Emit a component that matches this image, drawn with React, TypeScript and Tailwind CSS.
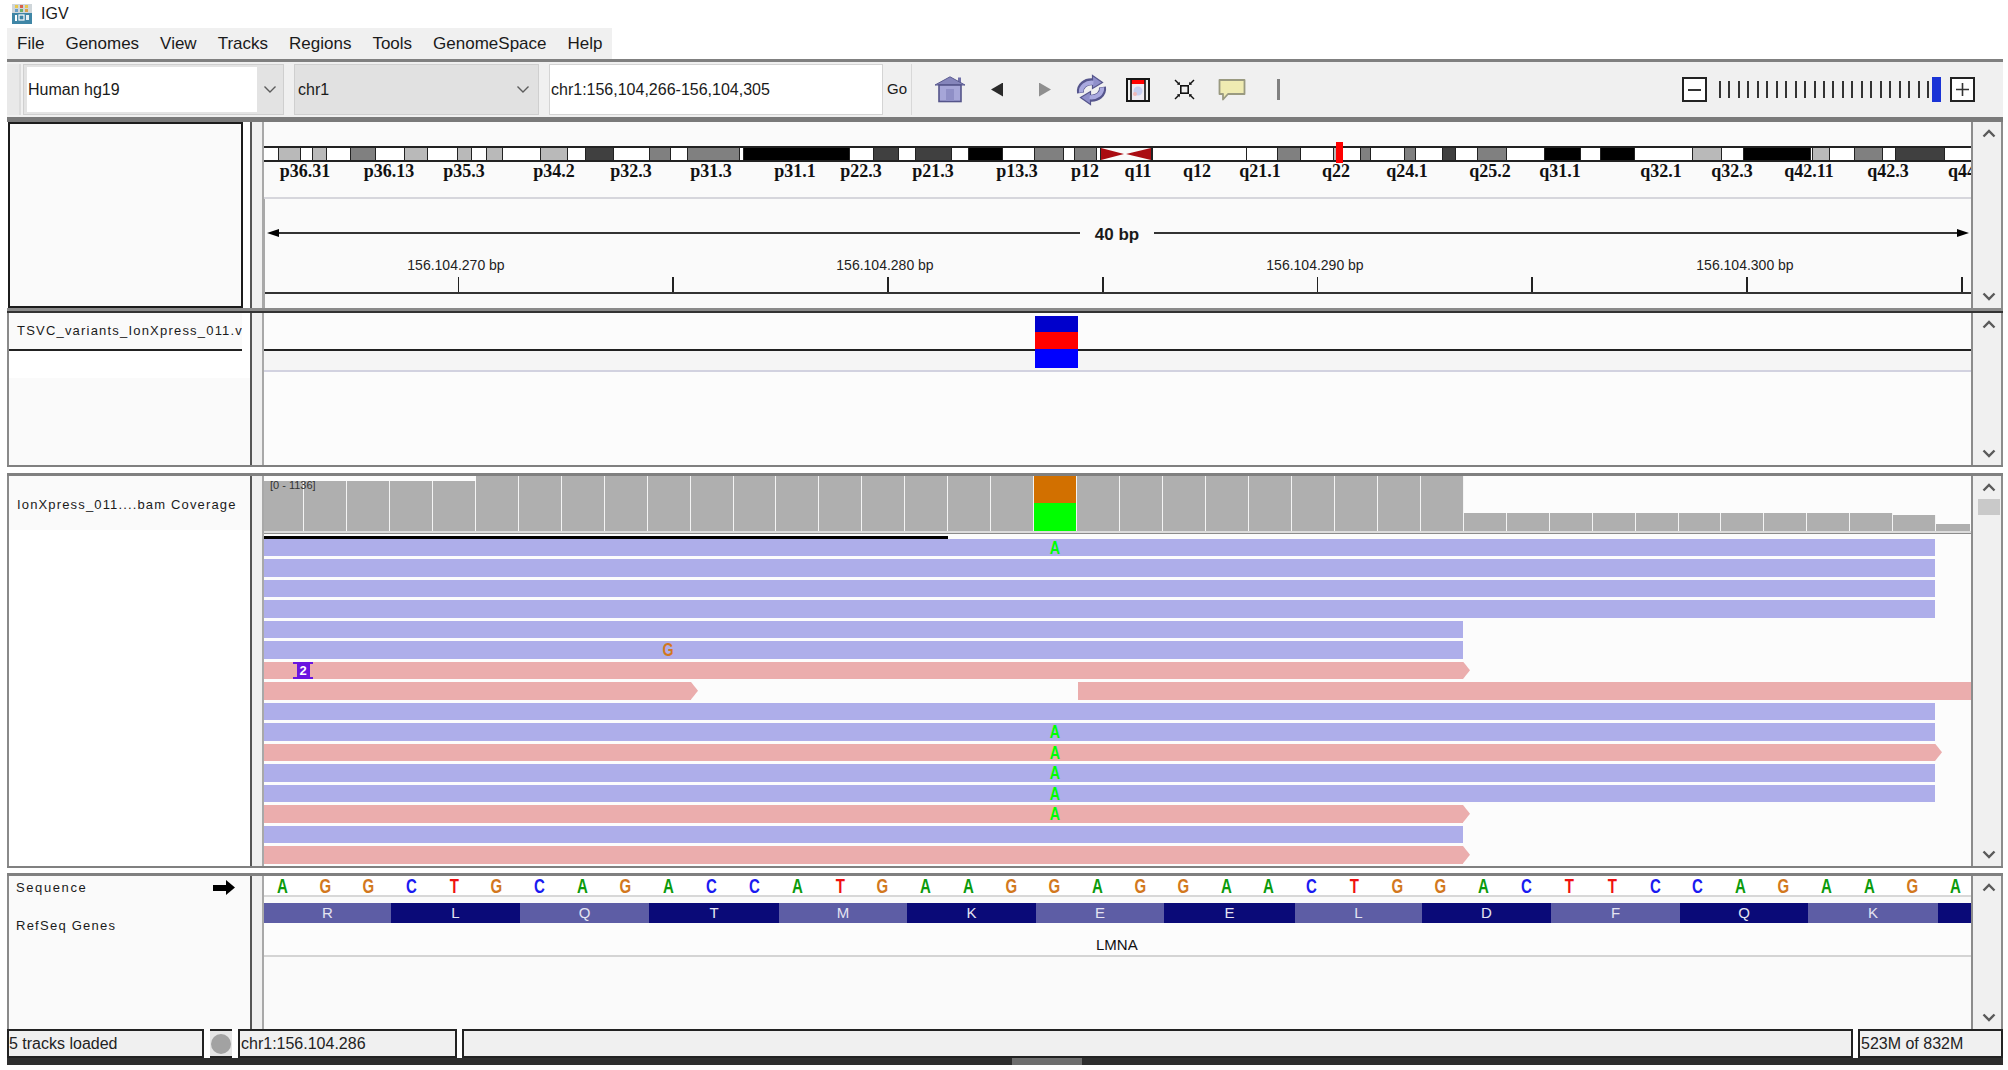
import React from "react";

const Chevron = ({ up }: { up?: boolean }) => (
  <svg width="14" height="9" viewBox="0 0 14 9" className="block">
    <polyline points={up ? "1.5,7.5 7,2 12.5,7.5" : "1.5,1.5 7,7 12.5,1.5"} fill="none" stroke="#5a5a5a" strokeWidth="2.4" />
  </svg>
);

const ScrollBar = ({ children }: { children?: React.ReactNode }) => (
  <div className="relative flex h-full w-[32px] flex-col items-center justify-between border-r-2 border-l-2 border-[#8c8c8c] bg-[#f0f0f0] py-[7px] pl-[3px]">
    <Chevron up />
    {children}
    <Chevron />
  </div>
);

const Gutter = () => (
  <div className="h-full w-[14px] shrink-0 border-r-2 border-l-2 border-r-[#a8a8a8] border-l-[#555555] bg-[#f0f0f0]" />
);

const bands: [number, string][] = [
  [279, "w"], [301, "l"], [313, "w"], [327, "l"], [351, "w"], [376, "m"], [405, "w"], [428, "l"], [458, "w"], [472, "l"],
  [487, "w"], [503, "l"], [541, "w"], [568, "l"], [586, "w"], [614, "d"], [650, "w"], [671, "m"], [688, "w"], [740, "m"],
  [744, "w"], [850, "k"], [874, "w"], [899, "d"], [916, "w"], [952, "d"], [969, "w"], [1003, "k"], [1035, "w"], [1064, "m"],
  [1075, "w"], [1097, "m"], [1101, "w"],
];
const bands2: [number, string][] = [
  [1246, "w"], [1277, "w"], [1300, "m"], [1333, "w"], [1340, "l"], [1360, "w"], [1370, "m"], [1404, "w"], [1415, "m"], [1442, "w"],
  [1455, "d"], [1477, "w"], [1506, "m"], [1544, "w"], [1580, "k"], [1600, "w"], [1634, "k"], [1692, "w"], [1721, "l"], [1743, "w"],
  [1810, "k"], [1812, "w"], [1829, "l"], [1854, "w"], [1882, "m"], [1895, "w"], [1944, "d"], [1971, "w"],
];
const bandBg: Record<string, string> = { w: "bg-white", l: "bg-[#b9b9b9]", m: "bg-[#808080]", d: "bg-[#404040]", k: "bg-black" };

const Segs = ({ list, from }: { list: [number, string][]; from: number }) => (
  <>
    {list.map(([end, c], i) => {
      const start = i === 0 ? from : list[i - 1][0];
      return <div key={end} className={`h-full shrink-0 border-r border-[#222222] ${bandBg[c]}`} style={{ width: end - start }} />;
    })}
  </>
);

const cytoLabels: [string, number][] = [
  ["p36.31", 305], ["p36.13", 389], ["p35.3", 464], ["p34.2", 554], ["p32.3", 631], ["p31.3", 711], ["p31.1", 795], ["p22.3", 861],
  ["p21.3", 933], ["p13.3", 1017], ["p12", 1085], ["q11", 1138], ["q12", 1197], ["q21.1", 1260], ["q22", 1336], ["q24.1", 1407],
  ["q25.2", 1490], ["q31.1", 1560], ["q32.1", 1661], ["q32.3", 1732], ["q42.11", 1809], ["q42.3", 1888], ["q44", 1962],
];

const ticks = [457.5, 672, 887, 1102, 1316.5, 1531, 1746, 1961];
const posLabels: [string, number][] = [["156.104.270 bp", 456], ["156.104.280 bp", 885], ["156.104.290 bp", 1315], ["156.104.300 bp", 1745]];

type Seg = { start: number; end: number; c: "b" | "p"; arrow?: boolean };
const R = (end: number, c: "b" | "p", arrow?: boolean): Seg[] => [{ start: 264, end, c, arrow }];
const reads: { segs: Seg[]; a?: boolean; thin?: boolean; g?: boolean; ins?: boolean }[] = [
  { segs: R(1935, "b"), a: true },
  { segs: R(1935, "b") },
  { segs: R(1935, "b") },
  { segs: R(1935, "b") },
  { segs: R(1463, "b") },
  { segs: R(1463, "b"), g: true },
  { segs: R(1463, "p", true), ins: true },
  { segs: [{ start: 264, end: 691, c: "p", arrow: true }, { start: 1078, end: 1971, c: "p" }] },
  { segs: R(1935, "b") },
  { segs: R(1935, "b"), a: true },
  { segs: R(1935, "p", true), a: true },
  { segs: R(1935, "b"), a: true },
  { segs: R(1935, "b"), a: true },
  { segs: R(1463, "p", true), a: true },
  { segs: R(1463, "b") },
  { segs: R(1463, "p", true) },
  { segs: R(1463, "b"), thin: true },
];

const seq = "AGGCTGCAGACCATGAAGGAGGAACTGGACTTCCAGAAGA".split("");
const seqColor: Record<string, string> = { A: "text-[#0b9a0b]", G: "text-[#d2781e]", C: "text-[#1a1af0]", T: "text-[#f01010]" };

const aminos: [string, number][] = [
  ["R", 391], ["L", 520], ["Q", 649], ["T", 779], ["M", 907], ["K", 1036], ["E", 1164], ["E", 1295], ["L", 1422], ["D", 1551],
  ["F", 1680], ["Q", 1808], ["K", 1938], ["", 1971],
];

const covCols = Array.from({ length: 40 }, (_, i) => {
  const h = i <= 4 ? 50 : i <= 27 ? 55 : i <= 37 ? 18 : i === 38 ? 16 : 7;
  const w = i === 0 ? 40 : i === 39 ? 34 : 42.96;
  return { i, h, w };
});

const HomeIcon = () => (
  <svg width="32" height="27" viewBox="0 0 32 27">
    <rect x="24" y="1.5" width="3" height="6" fill="#6f6fa8" />
    <polygon points="16,0.8 31,9 1,9" fill="#8585bb" stroke="#5b5b90" strokeWidth="1" />
    <rect x="5" y="9" width="22" height="16.5" fill="#a6a6d8" stroke="#55558a" strokeWidth="1.6" />
    <rect x="12" y="13" width="8" height="12" fill="#8f8fc6" />
  </svg>
);

const ReloadIcon = () => {
  const half = (
    <>
      <path d="M5 19 C4 12 10 7 18 8" fill="none" stroke="#55558c" strokeWidth="7" />
      <polygon points="17,1.5 27,8.5 17,14.5" fill="#8f8fca" stroke="#55558c" strokeWidth="1.2" />
      <path d="M5.5 18.5 C5 12.5 10.5 8 18 8.8" fill="none" stroke="#a9a9df" strokeWidth="4.2" />
    </>
  );
  return (
    <svg width="33" height="32" viewBox="0 0 32 32">
      {half}
      <g transform="rotate(180 16 16)">{half}</g>
    </svg>
  );
};

const RegionIcon = () => (
  <svg width="24" height="24" viewBox="0 0 24 24">
    <rect x="5" y="1" width="14" height="22" fill="#eeeaf2" />
    <rect x="5" y="1" width="14" height="5" fill="#ff0000" />
    <circle cx="12" cy="13" r="4.5" fill="#c6cef0" />
    <circle cx="9" cy="16" r="2" fill="#f0b8b8" />
    <rect x="1" y="1" width="22" height="22" fill="none" stroke="#151515" strokeWidth="2" />
    <line x1="5" y1="1" x2="5" y2="23" stroke="#151515" strokeWidth="1.6" />
    <line x1="19" y1="1" x2="19" y2="23" stroke="#151515" strokeWidth="1.6" />
  </svg>
);

const CollapseIcon = () => (
  <svg width="21" height="21" viewBox="0 0 21 21">
    <rect x="6.8" y="6.8" width="7.4" height="7.4" fill="none" stroke="#111111" strokeWidth="1.6" />
    <g stroke="#111111" strokeWidth="1.4">
      <line x1="1" y1="1" x2="5" y2="5" />
      <line x1="20" y1="1" x2="16" y2="5" />
      <line x1="1" y1="20" x2="5" y2="16" />
      <line x1="20" y1="20" x2="16" y2="16" />
    </g>
    <g fill="#111111">
      <polygon points="6,6 2.8,5.6 5.6,2.8" />
      <polygon points="15,6 18.2,5.6 15.4,2.8" />
      <polygon points="6,15 2.8,15.4 5.6,18.2" />
      <polygon points="15,15 18.2,15.4 15.4,18.2" />
    </g>
  </svg>
);

const CommentIcon = () => (
  <svg width="28" height="23" viewBox="0 0 28 23">
    <path d="M1.5 2 H26.5 V16 H10 L5 21.5 V16 H1.5 Z" fill="#efebb2" stroke="#9a9a80" strokeWidth="1.8" strokeLinejoin="round" />
  </svg>
);

const IgvIcon = () => (
  <svg width="20" height="20" viewBox="0 0 20 20">
    <rect x="0" y="0" width="20" height="20" fill="#3f86a6" />
    <rect x="0" y="0" width="20" height="9" fill="#cfd6da" />
    <rect x="3" y="1" width="3" height="3" fill="#e8c84a" />
    <rect x="8" y="1" width="3" height="3" fill="#d8604a" />
    <rect x="13" y="1" width="3" height="3" fill="#e8c84a" />
    <rect x="3" y="5" width="3" height="3" fill="#6aa0c8" />
    <rect x="8" y="5" width="3" height="3" fill="#6ab06a" />
    <rect x="13" y="5" width="3" height="3" fill="#d8a04a" />
    <rect x="3" y="11" width="2" height="6" fill="#ffffff" />
    <rect x="7" y="11" width="5" height="5" fill="none" stroke="#ffffff" strokeWidth="1.2" />
    <rect x="14" y="11" width="3" height="5" fill="#e6f0f4" />
  </svg>
);

const ComboArrow = () => (
  <svg width="14" height="9" viewBox="0 0 14 9">
    <polyline points="1.5,1.5 7,7 12.5,1.5" fill="none" stroke="#5c5c5c" strokeWidth="1.4" />
  </svg>
);

const menuItems = ["File", "Genomes", "View", "Tracks", "Regions", "Tools", "GenomeSpace", "Help"];

export default function App() {
  return (
    <div className="flex h-[1070px] w-[2008px] flex-col overflow-hidden bg-white font-['Liberation_Sans',sans-serif] text-[#1a1a1a]">
      {/* title bar */}
      <div className="flex h-[28px] shrink-0 items-center pl-[12px]">
        <IgvIcon />
        <span className="ml-[9px] text-[16px]">IGV</span>
      </div>
      {/* menu */}
      <div className="ml-[7px] flex h-[31px] w-[605px] shrink-0 items-center gap-[21px] bg-[#f0f0f0] pl-[10px] text-[17px]">
        {menuItems.map((m) => (
          <span key={m}>{m}</span>
        ))}
      </div>
      {/* toolbar */}
      <div className="ml-[7px] flex h-[63px] w-[1996px] shrink-0 items-center border-t-[3px] border-b-[5px] border-t-[#808080] border-b-[#7a7a7a] bg-[#f0f0f0] text-[16px]">
        <div className="h-[51px] w-[14px] shrink-0 border-r-2 border-[#dcdcdc] bg-[#e9e9e9]" />
        <div className="ml-[2px] flex h-[51px] w-[261px] items-center border border-[#cfcfcf] bg-[#e3e3e3]">
          <div className="ml-[3px] flex h-[45px] w-[230px] items-center bg-white pl-[1px]">Human hg19</div>
          <div className="flex flex-1 justify-center"><ComboArrow /></div>
        </div>
        <div className="ml-[10px] flex h-[51px] w-[245px] items-center border border-[#cfcfcf] bg-[#e1e1e1] pl-[3px]">
          <span className="flex-1">chr1</span>
          <div className="mr-[8px]"><ComboArrow /></div>
        </div>
        <div className="ml-[10px] flex h-[51px] w-[334px] items-center border border-[#d4d4d4] bg-white pl-[1px]">chr1:156,104,266-156,104,305</div>
        <div className="flex h-[51px] w-[29px] items-center justify-center border-r border-[#d8d8d8] text-[15px]">Go</div>
        <div className="ml-[22px] flex w-[32px] justify-center"><HomeIcon /></div>
        <div className="ml-[25px] h-[14px] w-[12px] bg-[#2a2a2a] [clip-path:polygon(100%_0,0_50%,100%_100%)]" />
        <div className="ml-[36px] h-[14px] w-[12px] bg-[#8f8f8f] [clip-path:polygon(0_0,100%_50%,0_100%)]" />
        <div className="ml-[24px] flex w-[33px] justify-center"><ReloadIcon /></div>
        <div className="ml-[18px]"><RegionIcon /></div>
        <div className="ml-[24px]"><CollapseIcon /></div>
        <div className="ml-[23px]"><CommentIcon /></div>
        <div className="ml-[31px] h-[21px] w-[3px] bg-[#808080]" />
        <div className="ml-[402px] flex h-[25px] w-[25px] items-center justify-center border-2 border-[#222222] bg-white">
          <div className="h-[2px] w-[13px] bg-[#333333]" />
        </div>
        <div className="ml-[12px] flex w-[210px] justify-between">
          {Array.from({ length: 23 }, (_, i) => (
            <div key={i} className="h-[17px] w-[2px] bg-[#333333]" />
          ))}
        </div>
        <div className="ml-[3px] h-[25px] w-[9px] bg-[#1a33d6]" />
        <div className="ml-[9px] flex h-[25px] w-[25px] items-center justify-center border-2 border-[#222222] bg-white">
          <svg width="15" height="15" viewBox="0 0 15 15"><path d="M7.5 1 V14 M1 7.5 H14" stroke="#333333" strokeWidth="1.6" /></svg>
        </div>
      </div>

      {/* header panel */}
      <div className="ml-[7px] flex h-[186px] w-[1996px] shrink-0">
        <div className="ml-[1px] h-[186px] w-[235px] shrink-0 border-2 border-[#1c1c1c] bg-[#fafafa]" />
        <div className="h-full w-[7px] shrink-0 bg-[#ffffff]" />
        <Gutter />
        <div className="relative flex h-full w-[1707px] shrink-0 flex-col bg-[#fafafa]">
          <div className="relative mt-[24px] flex h-[16px] w-full shrink-0 border-y-2 border-[#222222] bg-white">
            <Segs list={bands} from={264} />
            <div className="h-full w-[23px] shrink-0 bg-[#fafafa]">
              <div className="h-full w-full bg-[#aa0c12] [clip-path:polygon(0_0,100%_50%,0_100%)]" />
            </div>
            <div className="h-full w-[2px] shrink-0 bg-[#fafafa]" />
            <div className="h-full w-[27px] shrink-0 border-r-2 border-[#222222] bg-[#fafafa]">
              <div className="h-full w-full bg-[#aa0c12] [clip-path:polygon(100%_0,0_50%,100%_100%)]" />
            </div>
            <div className="h-full w-[93px] shrink-0 bg-white" />
            <Segs list={bands2} from={1246} />
            <div className="absolute top-[-6px] left-[1072px] h-[21px] w-[7px] bg-[#ff0000]" />
          </div>
          <div className="relative h-[17px] w-full shrink-0 font-['Liberation_Serif',serif] text-[18px] leading-[20px] font-bold text-[#111111]">
            {cytoLabels.map(([t, x]) => (
              <span key={t} className="absolute top-[-1px] -translate-x-1/2 whitespace-nowrap" style={{ left: x - 264 }}>{t}</span>
            ))}
          </div>
          <div className="mt-[18px] h-[2px] w-full shrink-0 bg-[#d6d6dc]" />
          <div className="absolute top-[77px] bottom-0 left-0 w-[1px] bg-[#a8a8a8]" />
          <div className="mt-[28px] flex h-[12px] w-full shrink-0 items-center pr-[2px] pl-[3px]">
            <div className="h-[8px] w-[12px] shrink-0 bg-black [clip-path:polygon(100%_0,0_50%,100%_100%)]" />
            <div className="h-[2px] w-[801px] shrink-0 bg-[#333333]" />
            <div className="w-[74px] shrink-0 pt-[3px] text-center text-[17px] leading-[12px] font-bold">40 bp</div>
            <div className="h-[2px] flex-1 bg-[#333333]" />
            <div className="h-[8px] w-[12px] shrink-0 bg-black [clip-path:polygon(0_0,100%_50%,0_100%)]" />
          </div>
          <div className="relative mt-[18px] h-[16px] w-full shrink-0 text-[14px] leading-[16px] text-[#222222]">
            {posLabels.map(([t, x]) => (
              <span key={t} className="absolute -translate-x-1/2 whitespace-nowrap" style={{ left: x - 264 }}>{t}</span>
            ))}
          </div>
          <div className="relative mt-[4px] h-[15px] w-full shrink-0">
            {ticks.map((x) => (
              <div key={x} className="absolute top-0 h-[15px] w-[1.5px] bg-[#222222]" style={{ left: x - 264 }} />
            ))}
          </div>
          <div className="h-[2px] w-full shrink-0 bg-[#333333]" />
        </div>
        <ScrollBar />
      </div>

      {/* separator */}
      <div className="ml-[7px] flex h-[5px] w-[1996px] shrink-0 flex-col">
        <div className="h-[3px] bg-[#8a8a8a]" />
        <div className="h-[2px] bg-[#333333]" />
      </div>

      {/* variants panel */}
      <div className="ml-[7px] flex h-[154px] w-[1996px] shrink-0 border-b-2 border-[#808080]">
        <div className="flex h-full w-[243px] shrink-0 flex-col border-l-2 border-[#8a8a8a]">
          <div className="flex h-[36px] w-[233px] shrink-0 items-center overflow-hidden bg-[#fafafa] pl-[8px] text-[13px] tracking-[1.2px] whitespace-nowrap">TSVC_variants_IonXpress_011.v</div>
          <div className="h-[2px] w-[233px] shrink-0 bg-[#222222]" />
          <div className="h-[27px] shrink-0 bg-white" />
          <div className="flex-1 bg-[#fafafa]" />
        </div>
        <Gutter />
        <div className="relative flex h-full w-[1707px] shrink-0 flex-col bg-[#fcfcfc]">
          <div className="h-[36px] shrink-0" />
          <div className="h-[2px] shrink-0 bg-[#222222]" />
          <div className="h-[19px] shrink-0 bg-[#f5f5f5]" />
          <div className="h-[2px] shrink-0 bg-[#d2d2e0]" />
          <div className="absolute top-[3px] left-[771px] flex h-[52px] w-[43px] flex-col">
            <div className="h-[16px] bg-[#0000cc]" />
            <div className="h-[17px] bg-[#ff0000]" />
            <div className="flex-1 bg-[#0000ff]" />
          </div>
        </div>
        <ScrollBar />
      </div>

      <div className="h-[6px] shrink-0" />

      {/* alignment panel */}
      <div className="ml-[7px] flex h-[395px] w-[1996px] shrink-0 overflow-hidden border-t-[3px] border-b-2 border-[#808080]">
        <div className="flex h-full w-[243px] shrink-0 flex-col border-l-2 border-[#8a8a8a]">
          <div className="flex h-[54px] shrink-0 items-center bg-[#fafafa] pt-[3px] pl-[8px] text-[13px] tracking-[1.15px] whitespace-nowrap">IonXpress_011....bam Coverage</div>
          <div className="flex-1 bg-white" />
        </div>
        <Gutter />
        <div className="relative flex h-full w-[1707px] shrink-0 flex-col overflow-hidden bg-[#fcfcfc]">
          <div className="relative flex h-[55px] w-full shrink-0 items-end">
            {covCols.map((c) => (
              <div key={c.i} className={`shrink-0 ${c.i === 18 ? "flex flex-col" : "bg-[#afafaf]"} ${c.i === 39 ? "" : "border-r-[1.5px] border-[#f4f4f4]"}`} style={{ width: c.w, height: c.h }}>
                {c.i === 18 && (
                  <>
                    <div className="h-[27px] bg-[#d27000]" />
                    <div className="flex-1 bg-[#00ff00]" />
                  </>
                )}
              </div>
            ))}
            <span className="absolute top-[3px] left-[6px] text-[11px] leading-[12px] text-[#333333]">[0 - 1136]</span>
          </div>
          <div className="h-[2px] w-full shrink-0 bg-[#dddddd]" />
          <div className="h-[1px] w-full shrink-0 bg-[#8c8c8c]" />
          <div className="mt-[2px] h-[2.5px] w-[684px] shrink-0 bg-black" />
          <div className="flex shrink-0 flex-col gap-[3px]">
            {reads.map((r, idx) => (
              <div key={idx} className={`relative flex w-full shrink-0 ${r.thin ? "h-[2.5px]" : "h-[17.5px]"}`}>
                {r.segs.map((s) => (
                  <React.Fragment key={s.start}>
                    <div className={`h-full shrink-0 ${s.c === "b" ? "bg-[#aeaeea]" : "bg-[#ebadad]"}`} style={{ marginLeft: s.start === 264 ? 0 : s.start - 698, width: s.end - s.start }} />
                    {s.arrow && <div className="h-full w-[7px] shrink-0 bg-[#ebadad] [clip-path:polygon(0_0,100%_50%,0_100%)]" />}
                  </React.Fragment>
                ))}
                {r.a && <span className="absolute top-[-2px] left-[780px] w-[22px] scale-x-[0.75] text-center text-[19px] leading-[21px] font-bold text-[#00ff00]">A</span>}
                {r.g && <span className="absolute top-[-2px] left-[393px] w-[22px] scale-x-[0.75] text-center text-[19px] leading-[21px] font-bold text-[#d2781e]">G</span>}
                {r.ins && (
                  <div className="absolute top-0 left-[29px] flex h-[17.5px] w-[20px] flex-col items-center">
                    <div className="h-[2px] w-full bg-[#6a14e0]" />
                    <div className="flex h-[13.5px] w-[13px] items-center justify-center bg-[#6a14e0] text-[13px] leading-none font-bold text-white">2</div>
                    <div className="h-[2px] w-full bg-[#6a14e0]" />
                  </div>
                )}
              </div>
            ))}
          </div>
        </div>
        <ScrollBar>
          <div className="absolute top-[23px] left-[5px] h-[16px] w-[22px] bg-[#c9c9c9]" />
        </ScrollBar>
      </div>

      <div className="h-[5px] shrink-0" />

      {/* sequence panel */}
      <div className="ml-[7px] flex h-[156px] w-[1996px] shrink-0 border-t-[3px] border-[#808080]">
        <div className="relative h-full w-[243px] shrink-0 border-l-2 border-[#8a8a8a] bg-[#fafafa] pl-[7px] text-[13px] tracking-[1.25px]">
          <div className="pt-[3px] leading-[18px] tracking-[1.6px]">Sequence</div>
          <div className="pt-[20px] leading-[18px]">RefSeq Genes</div>
          <div className="absolute top-[4px] left-[204px] flex items-center">
            <div className="h-[6px] w-[13px] bg-black" />
            <div className="h-[15px] w-[9px] bg-black [clip-path:polygon(0_0,100%_50%,0_100%)]" />
          </div>
        </div>
        <Gutter />
        <div className="flex h-full w-[1707px] shrink-0 flex-col overflow-hidden bg-[#fafafa]">
          <div className="flex h-[19px] w-full shrink-0 bg-white">
            {seq.map((s, i) => (
              <div key={i} className={`flex h-full w-[42.9px] shrink-0 scale-x-[0.75] items-center justify-center text-[20px] font-bold ${i === 0 ? "-ml-[3px]" : ""} ${seqColor[s]}`}>{s}</div>
            ))}
          </div>
          <div className="h-[2px] w-full shrink-0 bg-[#d8d8d8]" />
          <div className="h-[6px] w-full shrink-0" />
          <div className="flex h-[20px] w-full shrink-0">
            {aminos.map(([t, end], i) => (
              <div key={i} className={`flex h-full shrink-0 items-center justify-center text-[15px] text-[#e4e4f2] ${i % 2 === 0 ? "bg-[#5d5da5]" : "bg-[#0a0a78]"}`} style={{ width: end - (i === 0 ? 264 : aminos[i - 1][1]) }}>{t}</div>
            ))}
          </div>
          <div className="flex h-[32px] w-full shrink-0 items-start bg-[#fcfcfc] pt-[14px] pl-[832px] text-[15px] leading-[16px] text-[#111111]">LMNA</div>
          <div className="h-[2px] w-full shrink-0 bg-[#d4d4d4]" />
          <div className="flex-1" />
        </div>
        <ScrollBar />
      </div>

      {/* status bar */}
      <div className="ml-[7px] flex h-[29px] w-[1996px] shrink-0 text-[16px] leading-none text-[#222222]">
        <div className="flex h-full w-[197px] items-center border-y-2 border-r-2 border-l-2 border-[#222222] bg-[#f0f0f0]">5 tracks loaded</div>
        <div className="ml-[6px] flex h-full w-[22px] items-center justify-center border-y-2 border-[#222222] bg-[#e6e6e6]">
          <div className="h-[20px] w-[20px] rounded-full bg-[#a2a2a2]" />
        </div>
        <div className="ml-[6px] flex h-full w-[219px] items-center border-y-2 border-x-2 border-[#222222] bg-[#f0f0f0] pl-[1px]">chr1:156.104.286</div>
        <div className="ml-[5px] h-full w-[1391px] border-y-2 border-x-2 border-[#222222] bg-[#f0f0f0]" />
        <div className="ml-[5px] flex h-full flex-1 items-center border-y-2 border-x-2 border-[#222222] bg-[#f0f0f0] pl-[1px]">523M of 832M</div>
      </div>
      {/* bottom strip */}
      <div className="ml-[7px] flex h-[7px] w-[1996px] shrink-0 bg-[#2e2e2e] pl-[1005px]">
        <div className="h-full w-[70px] bg-[#6e6e6e]" />
      </div>
    </div>
  );
}
